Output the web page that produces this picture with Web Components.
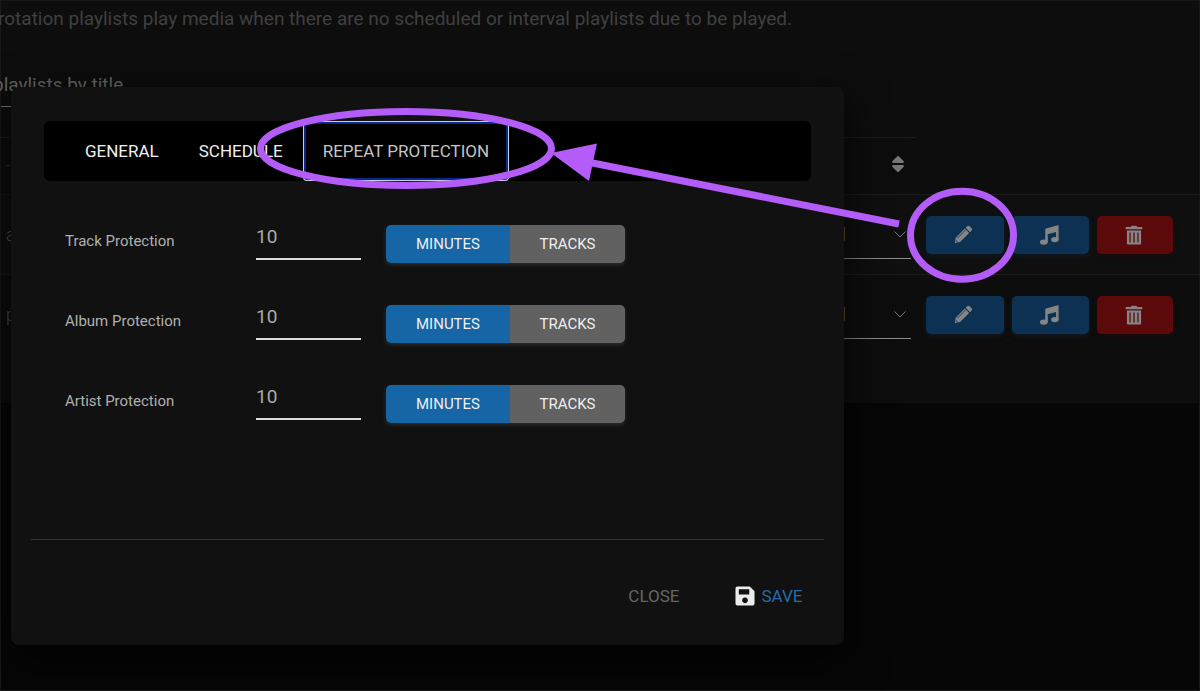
<!DOCTYPE html>
<html lang="en">
<head>
<meta charset="utf-8">
<title>Playlists</title>
<style>
html, body { height: 100%; }
body { margin: 0; background: #060606; color: #a9a9a9; font-family: Roboto, "Noto Sans", sans-serif; font-size: 16px; overflow: hidden; }
</style>
</head>
<body>
<playlist-page>
  <playlist-panel>
    <span slot="intro">rotation playlists play media when there are no scheduled or interval playlists due to be played.</span>
    <playlist-table></playlist-table>
  </playlist-panel>
  <edit-dialog slot="dialog">
    <tab-strip slot="tabs"></tab-strip>
    <protection-row name="track">Track Protection</protection-row>
    <protection-row name="album">Album Protection</protection-row>
    <protection-row name="artist">Artist Protection</protection-row>
  </edit-dialog>
  <callout-marks slot="marks"></callout-marks>
</playlist-page>
<script>
const define = (name, html, setup) => customElements.define(name, class extends HTMLElement {
  connectedCallback() {
    if (this.shadowRoot) return;
    const t = document.createElement('template');
    t.innerHTML = '<style>*{box-sizing:border-box}button,input,select{font:inherit;margin:0;border:0;background:none;color:inherit;outline:0}</style>' + html;
    this.attachShadow({ mode: 'open' }).append(t.content.cloneNode(true));
    if (setup) setup(this, this.shadowRoot);
  }
});

define('playlist-page', `
<style>
:host { display: block; position: relative; min-height: 100%; box-sizing: border-box; border: 1px solid #191919; }
.overlay { position: absolute; inset: 0; padding: 86px 29.6% 0 10px; }
</style>
<slot></slot>
<div class="overlay"><slot name="dialog"></slot></div>
<slot name="marks"></slot>`);

define('playlist-panel', `
<style>
:host { display: block; background: #0d0d0d; padding-bottom: 49px; }
header { height: 136px; }
p { margin: 0 0 0 -3px; padding-top: 6px; font-size: 19px; line-height: 24px; color: #404040; white-space: nowrap; }
label { display: block; margin: 42px 0 0 -8px; font-size: 19px; line-height: 24px; color: #666; }
input { display: block; width: 320px; height: 10px; border-bottom: 1px solid #777; }
</style>
<header>
  <p><slot name="intro"></slot></p>
  <label for="filter">playlists by title</label>
  <input id="filter" type="text">
</header>
<slot></slot>`);

const shapes = {
  edit: '<path d="M2 21.5l1.2-6.2L14.2 4.300l5.200 5.200L8.500 20.500z"/><path d="M15.200 3.300l1.700-1.700q1.500-1.300 3 0l2.300 2.300q1.300 1.500 0 3l-1.700 1.700z"/><path d="M5.300 15.700l9.700-9.700M3.300 18.300l2.500 2.500" fill="none" stroke="#0c3152" stroke-width="1"/>',
  music: '<path d="M7.500 4.500L23.500 0v17h-3V8.500L10.500 11V20.500H7.500z"/><ellipse cx="5.800" cy="20.500" rx="4.700" ry="3.200"/><ellipse cx="19" cy="17.500" rx="4.500" ry="3.200"/>',
  trash: '<path fill-rule="evenodd" d="M9 1h6l1 1.500h6V5H2V2.500h6zM3.500 6.500h17V22q0 1.500-1.500 1.500H5Q3.500 23.500 3.500 22zM6.500 9v12h1.500V9zM11.200 9v12h1.600V9zM16 9v12h1.500V9z"/>'
};
define('icon-button', `
<style>
:host { display: block; flex: 78 1 0; }
:host([kind=trash]) { flex-grow: 76; }
button { display: flex; width: 100%; height: 38px; align-items: center; justify-content: center; border-radius: 5px; background: #0c3152; box-shadow: 0 2px 4px #111922; padding: 0 3px 0 0; }
:host([kind=trash]) button { background: #5c090c; box-shadow: 0 2px 4px #22090a; }
svg { width: 20px; height: 20px; fill: #858585; }
</style>
<button type="button"><svg viewBox="0 0 24 24"></svg></button>`, (host, root) => {
  root.querySelector('svg').innerHTML = shapes[host.getAttribute('kind')];
  root.querySelector('button').setAttribute('aria-label', host.getAttribute('label'));
});

const row = (title) => `
<tr><td class="title">${title}</td>
<td class="type"><div><select aria-label="Type"><option>l</option></select><svg viewBox="0 0 12 7"><path d="M.5 .5L6 6 11.500 .5"/></svg></div></td>
<td class="actions"><div><icon-button kind="edit" label="Edit"></icon-button><icon-button kind="music" label="Media"></icon-button><icon-button kind="trash" label="Delete"></icon-button></div></td></tr>`;
define('playlist-table', `
<style>
:host { display: block; }
table { width: 100%; border-spacing: 0; table-layout: fixed; }
th, td { padding: 0; text-align: left; font-weight: 300; }
th { height: 57px; padding-bottom: 4px; border-top: 1px solid #1b1b1b; }
th.actions { border-color: transparent; }
td { height: 80px; border-top: 1px solid #1b1b1b; color: #555; }
tbody tr:first-child td { background: #0f0f0f; }
.title { padding-left: 5px; font-size: 18px; }
th.title { color: #263850; }
.type { width: 127px; padding-right: 6px; }
.actions { width: 282px; padding: 0 26px 0 9px; }
.actions div { display: flex; gap: 8px; }
.type div { display: flex; align-items: center; height: 48px; border-bottom: 1px solid #8c8c8c; }
select { appearance: none; flex: 1; padding: 0 0 0 52px; font-size: 18px; font-weight: 300; color: #777; }
.type div svg { width: 12px; height: 7px; margin-right: 5px; fill: none; stroke: #777; }
th button { display: block; margin: 0 7px 0 auto; padding: 0; height: 16px; }
th svg { display: block; width: 12px; height: 16px; fill: #777; }
</style>
<table>
<thead><tr><th class="title">-</th><th class="type"><button type="button" aria-label="Sort"><svg viewBox="0 0 12 16"><path d="M5 .5q1-1 2 0L11.500 5q1 1.500-.5 2H1q-1.500-.5-.5-2zM5 15.500q1 1 2 0L11.500 11q1-1.500-.5-2H1q-1.500.5-.5 2z"/></svg></button></th><th class="actions"></th></tr></thead>
<tbody>${row('a')}${row('p')}</tbody>
</table>`);

define('edit-dialog', `
<style>
:host { display: block; box-sizing: border-box; background: #111; border-radius: 8px; padding: 34px 20px 29px; box-shadow: 0 14px 40px 4px #000a; }
.tabs { margin: 0 13px; }
.fields { display: grid; gap: 42px; padding: 44px 34px 116px; }
footer { display: flex; justify-content: flex-end; align-items: center; gap: 14px; border-top: 1px solid #353535; padding: 36px 1px 0 0; font-size: 17px; }
button { display: flex; align-items: center; gap: 6px; height: 40px; padding: 0 21px; color: #666; }
.save { color: #286ba6; }
svg { width: 20px; height: 20px; fill: #ececec; }
</style>
<div class="tabs"><slot name="tabs"></slot></div>
<div class="fields"><slot></slot></div>
<footer><button type="button">CLOSE</button>
<button type="button" class="save"><svg viewBox="0 0 21 21"><path fill-rule="evenodd" d="M2.500.5H15.500L20.500 5.500V18.500q0 2-2 2H2.500q-2 0-2-2V2.500q0-2 2-2zM4 3.500V9H15V3.500zM10.500 12a3 3 0 1 0 .01 0z"/></svg>SAVE</button></footer>`);

define('tab-strip', `
<style>
:host { display: block; background: #000; border-radius: 6px; padding-left: 21px; font-size: 17px; }
nav { display: flex; }
button { height: 60px; padding: 0 20px; color: #f0f0f0; }
[aria-selected=true] { color: #c4c4c4; border-radius: 4px; box-shadow: inset 0 0 0 1px #c9d0dc, inset 0 0 0 3px #07298a; }
</style>
<nav role="tablist"><button role="tab">GENERAL</button><button role="tab">SCHEDULE</button><button role="tab" aria-selected="true">REPEAT PROTECTION</button></nav>`);

define('protection-row', `
<style>
:host { display: grid; grid-template-columns: 191px 105px 264px; align-items: center; height: 38px; }
label { font-size: 15px; line-height: 20px; color: #b0b0b0; margin-bottom: 6px; }
input { width: 100%; height: 46px; margin: -11px 0 3px; padding: 0; border-bottom: 2px solid #ddd; border-radius: 0; font-size: 19px; color: #aaa; }
.unit { display: flex; margin-left: 25px; border-radius: 5px; overflow: hidden; box-shadow: 0 2px 4px #2c2c2c; }
button { flex: 115 1 0; height: 38px; padding: 0; background: #616161; color: #eee; font-size: 15px; }
.on { flex-grow: 124; background: #1665a6; }
</style>
<label for="v"><slot></slot></label>
<input id="v" type="text" value="10">
<div class="unit"><button type="button" class="on" aria-pressed="true">MINUTES</button><button type="button">TRACKS</button></div>`);

define('callout-marks', `
<style>
:host { position: absolute; top: -1px; left: -1px; pointer-events: none; }
svg { display: block; width: 1200px; height: 400px; fill: none; stroke: #b45cf8; stroke-width: 7; }
.head { fill: #b45cf8; stroke: none; }
</style>
<svg viewBox="0 0 1200 400" aria-hidden="true">
<ellipse cx="406" cy="148.500" rx="145.500" ry="37"/>
<ellipse cx="962" cy="235.300" rx="51.500" ry="44"/>
<path d="M899 224L590 162.500"/>
<path class="head" d="M551 153L597 143.500 589 181z"/>
</svg>`);
</script>
</body>
</html>
